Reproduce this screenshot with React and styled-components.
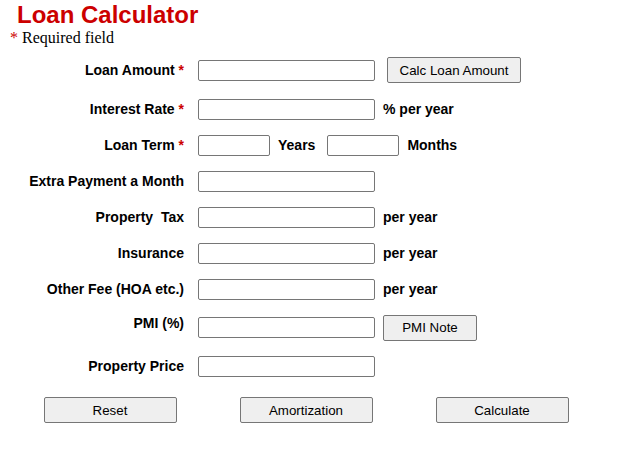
import React from 'react';
import styled, { createGlobalStyle } from 'styled-components';

const GlobalStyle = createGlobalStyle`
  body {
    margin: 0;
    background: #fff;
    font-family: "Liberation Sans", Arial, sans-serif;
  }
`;

const Page = styled.div`
  width: 617px;
  padding-top: 1px;
`;

const Title = styled.h1`
  margin: 0;
  padding-left: 17px;
  font-family: "Liberation Sans", Arial, sans-serif;
  font-size: 24px;
  line-height: 28px;
  font-weight: bold;
  color: #cc0000;
`;

const Note = styled.div`
  padding-left: 10px;
  font-family: "Liberation Serif", "Times New Roman", serif;
  font-size: 16px;
  line-height: 18px;
  color: #000;
`;

const Star = styled.span`
  color: #cc0000;
  font-weight: ${(props) => (props.$bold ? 'bold' : 'normal')};
`;

const Form = styled.div`
  margin-top: 2px;
`;

const Row = styled.div`
  display: grid;
  grid-template-columns: 184px 1fr;
  column-gap: 14px;
  align-items: center;
  height: ${(props) => props.$h || 36}px;
`;

const Label = styled.div`
  text-align: right;
  font-size: 14px;
  line-height: 16px;
  font-weight: bold;
  color: #000;
  white-space: nowrap;
  ${(props) => props.$top && 'align-self: start; margin-top: 8px;'}
`;

const Field = styled.div`
  display: flex;
  align-items: center;
  gap: 8px;
`;

const Input = styled.input`
  box-sizing: border-box;
  width: ${(props) => props.$w || 177}px;
  height: 21px;
  margin: 0 0 0 ${(props) => props.$ml || 0}px;
  padding: 1px 2px;
  border: 1px solid #767676;
  border-radius: 2px;
  background: #fff;
  font: 13.33px "Liberation Sans", Arial, sans-serif;
`;

const Unit = styled.span`
  font-size: 14px;
  line-height: 16px;
  font-weight: bold;
  color: #000;
`;

const Button = styled.button`
  box-sizing: border-box;
  width: ${(props) => props.$w || 133}px;
  height: 26px;
  margin: 0 0 0 ${(props) => props.$ml || 0}px;
  padding: 0;
  border: 1px solid #767676;
  border-radius: 2px;
  background: #efefef;
  color: #000;
  font: 13.33px "Liberation Sans", Arial, sans-serif;
`;

const Actions = styled.div`
  display: grid;
  grid-template-columns: repeat(3, 196px);
  justify-items: center;
  margin: 13px 0 0 12px;
`;

const perYear = [
  { label: 'Property\u00a0 Tax' },
  { label: 'Insurance' },
  { label: 'Other Fee (HOA etc.)' },
];

export default function App() {
  return (
    <Page>
      <GlobalStyle />
      <Title>Loan Calculator</Title>
      <Note>
        <Star>*</Star> Required field
      </Note>
      <Form>
        <Row $h={42}>
          <Label>
            Loan Amount <Star $bold>*</Star>
          </Label>
          <Field>
            <Input type="text" />
            <Button $w={134} $ml={4}>Calc Loan Amount</Button>
          </Field>
        </Row>
        <Row>
          <Label>
            Interest Rate <Star $bold>*</Star>
          </Label>
          <Field>
            <Input type="text" />
            <Unit>% per year</Unit>
          </Field>
        </Row>
        <Row>
          <Label>
            Loan Term <Star $bold>*</Star>
          </Label>
          <Field>
            <Input type="text" $w={72} />
            <Unit>Years</Unit>
            <Input type="text" $w={72} $ml={4} />
            <Unit>Months</Unit>
          </Field>
        </Row>
        <Row>
          <Label>Extra Payment a Month</Label>
          <Field>
            <Input type="text" />
          </Field>
        </Row>
        {perYear.map((r) => (
          <Row key={r.label}>
            <Label>{r.label}</Label>
            <Field>
              <Input type="text" />
              <Unit>per year</Unit>
            </Field>
          </Row>
        ))}
        <Row $h={41}>
          <Label $top>PMI (%)</Label>
          <Field>
            <Input type="text" />
            <Button $w={94}>PMI Note</Button>
          </Field>
        </Row>
        <Row>
          <Label>Property Price</Label>
          <Field>
            <Input type="text" />
          </Field>
        </Row>
      </Form>
      <Actions>
        <Button>Reset</Button>
        <Button>Amortization</Button>
        <Button>Calculate</Button>
      </Actions>
    </Page>
  );
}
